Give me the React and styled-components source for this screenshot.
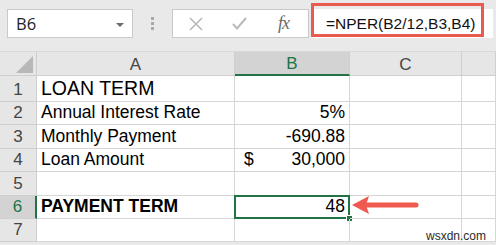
import React from 'react'
import styled, { createGlobalStyle } from 'styled-components'

const GlobalStyle = createGlobalStyle`
  html, body { margin: 0; padding: 0; background: #e9e9e9; overflow: hidden; }
  body { font-family: "Liberation Sans", Arial, sans-serif; }
`

const Page = styled.div`
  position: relative;
  width: 496px;
  height: 245px;
  background: #e9e9e9;
  overflow: hidden;
`

const Toolbar = styled.div`
  display: flex;
  align-items: flex-start;
  height: 51px;
  padding: 9px 0 0 7px;
  box-sizing: border-box;
`

const NameBox = styled.div`
  display: flex;
  align-items: center;
  justify-content: space-between;
  width: 126px;
  height: 29px;
  box-sizing: border-box;
  padding: 0 8px 0 8px;
  background: #fff;
  border: 1px solid #c9c9c9;
  font-family: "Open Sans", sans-serif;
  font-size: 16.5px;
  color: #222;
`

const Caret = styled.span`
  width: 0;
  height: 0;
  border-left: 4px solid transparent;
  border-right: 4px solid transparent;
  border-top: 4px solid #6a6a6a;
  margin-top: 2px;
`

const Grip = styled.div`
  width: 39px;
  height: 29px;
  display: flex;
  flex-direction: column;
  align-items: center;
  justify-content: center;
  gap: 2px;
  span { width: 3px; height: 3px; background: #a9a9a9; }
`

const ButtonBox = styled.div`
  display: flex;
  align-items: center;
  width: 137px;
  height: 29px;
  box-sizing: border-box;
  background: #fff;
  border: 1px solid #c9c9c9;
`

const ToolButton = styled.div`
  width: ${p => p.w}px;
  display: flex;
  justify-content: center;
  align-items: center;
`

const Fx = styled.span`
  font-family: "Liberation Serif", serif;
  font-style: italic;
  font-size: 18px;
  color: #6b6b6b;
  letter-spacing: -1px;
`

const FormulaBar = styled.div`
  position: relative;
  margin-left: 2px;
  width: 182px;
  height: 29px;
  background: #fff;
  display: flex;
  align-items: center;
  padding-left: 15px;
  box-sizing: border-box;
  font-size: 15.5px;
  color: #111;
`

const Highlight = styled.div`
  position: absolute;
  left: 0;
  top: -6px;
  width: 173px;
  height: 34px;
  box-sizing: border-box;
  border: 3px solid #ea5a4e;
`

const Sheet = styled.div`
  display: grid;
  grid-template-columns: 37px 198px 115px 112px 1fr;
  grid-template-rows: 25px 26px repeat(6, 23.4px);
  background: #fff;
`

const ColHead = styled.div`
  display: flex;
  align-items: center;
  justify-content: center;
  background: ${p => p.active ? '#d3d3d3' : '#e6e6e6'};
  color: ${p => p.active ? '#217346' : '#444'};
  border-right: 1px solid #cfcfcf;
  border-top: 1px solid #d8d8d8;
  border-bottom: ${p => p.active ? '2px solid #217346' : '1px solid #cfcfcf'};
  box-sizing: border-box;
  font-size: 17px;
  padding-top: 2px;
`

const Corner = styled.div`
  position: relative;
  background: #e6e6e6;
  border-right: 1px solid #cfcfcf;
  border-top: 1px solid #d8d8d8;
  border-bottom: 1px solid #cfcfcf;
  box-sizing: border-box;
  &::after {
    content: '';
    position: absolute;
    right: 3px;
    bottom: 2px;
    width: 17px;
    height: 17px;
    background: #b8b8b8;
    clip-path: polygon(100% 0, 100% 100%, 0 100%);
  }
`

const RowHead = styled.div`
  display: flex;
  align-items: flex-end;
  justify-content: center;
  padding-bottom: 1px;
  background: ${p => p.active ? '#d3d3d3' : '#e6e6e6'};
  color: ${p => p.active ? '#217346' : '#444'};
  border-right: ${p => p.active ? '2px solid #217346' : '1px solid #cfcfcf'};
  border-bottom: 1px solid #cfcfcf;
  box-sizing: border-box;
  font-size: 17px;
`

const Cell = styled.div`
  position: relative;
  display: flex;
  align-items: flex-end;
  justify-content: ${p => p.align === 'right' ? 'flex-end' : p.align === 'split' ? 'space-between' : 'flex-start'};
  padding: 0 4px 1px ${p => p.align === 'split' ? '9px' : '4px'};
  border-right: 1px solid #d6d6d6;
  border-bottom: 1px solid #d6d6d6;
  box-sizing: border-box;
  font-size: ${p => p.big ? '19.5px' : '17.5px'};
  font-weight: ${p => p.bold ? 700 : 400};
  color: #000;
  white-space: nowrap;
  ${p => p.selected && `
    &::before {
      content: '';
      position: absolute;
      left: -1px; top: -1px; right: -1px; bottom: -1px;
      border: 2px solid #217346;
    }
    &::after {
      content: '';
      position: absolute;
      right: -4px; bottom: -4px;
      width: 5px; height: 5px;
      background: #217346;
      border: 1px solid #fff;
    }
  `}
`

const Arrow = styled.svg`
  position: absolute;
  left: 350px;
  top: 194px;
`

const Watermark = styled.div`
  position: absolute;
  right: 10px;
  bottom: 2px;
  font-size: 12px;
  color: #2a2a2a;
`

const rows = [
  { a: 'LOAN TERM', big: true },
  { a: 'Annual Interest Rate', b: '5%' },
  { a: 'Monthly Payment', b: '-690.88' },
  { a: 'Loan Amount', b: '30,000', dollar: true },
  { a: '' },
  { a: 'PAYMENT TERM', b: '48', bold: true, selected: true },
  { a: '' },
]

const App = () => (
  <Page>
    <GlobalStyle />
    <Toolbar>
      <NameBox>B6<Caret /></NameBox>
      <Grip><span /><span /><span /></Grip>
      <ButtonBox>
        <ToolButton w={46}>
          <svg width="14" height="14" viewBox="0 0 14 14"><path d="M1 1 L13 13 M13 1 L1 13" stroke="#b9b9b9" strokeWidth="1.6" /></svg>
        </ToolButton>
        <ToolButton w={40}>
          <svg width="15" height="13" viewBox="0 0 15 13"><path d="M1 7 L5 11.5 L14 1" stroke="#b9b9b9" strokeWidth="2" fill="none" /></svg>
        </ToolButton>
        <ToolButton w={49}><Fx>fx</Fx></ToolButton>
      </ButtonBox>
      <FormulaBar>
        =NPER(B2/12,B3,B4)
        <Highlight />
      </FormulaBar>
    </Toolbar>
    <Sheet>
      <Corner />
      <ColHead>A</ColHead>
      <ColHead active>B</ColHead>
      <ColHead>C</ColHead>
      <ColHead />
      {rows.map((r, i) => (
        <React.Fragment key={i}>
          <RowHead active={r.selected}>{i + 1}</RowHead>
          <Cell big={r.big} bold={r.bold}>{r.a}</Cell>
          <Cell align={r.dollar ? 'split' : 'right'} selected={r.selected}>
            {r.dollar && <span>$</span>}
            {r.b && <span>{r.b}</span>}
          </Cell>
          <Cell />
          <Cell />
        </React.Fragment>
      ))}
    </Sheet>
    <Arrow width="70" height="22" viewBox="0 0 70 22">
      <path d="M2 11 L19 2 L16 11 L19 20 Z" fill="#ee5a4f" />
      <line x1="15" y1="11" x2="66" y2="11" stroke="#ee5a4f" strokeWidth="5" strokeLinecap="round" />
    </Arrow>
    <Watermark>wsxdn.com</Watermark>
  </Page>
)

export default App
